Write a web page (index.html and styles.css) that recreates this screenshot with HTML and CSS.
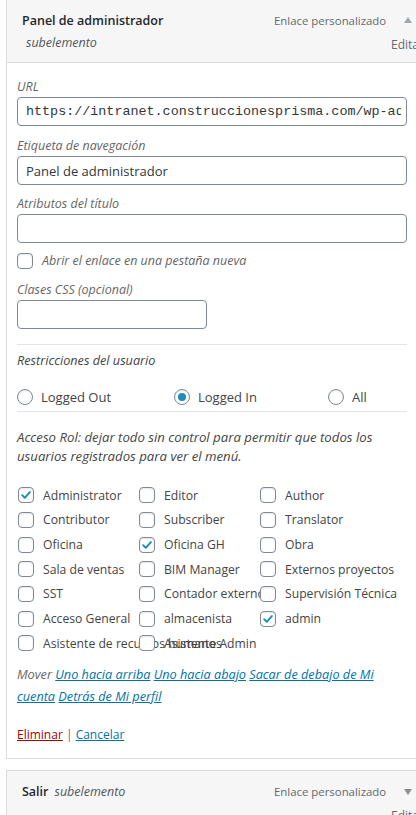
FILE: index.html
```html
<!DOCTYPE html>
<html lang="es">
<head>
<meta charset="utf-8">
<title>Panel de administrador</title>
<link rel="stylesheet" href="styles.css">
</head>
<body>
<div class="menu-item">
  <div class="item-bar">
    <div class="item-title">
      <span class="title">Panel de administrador</span>
      <span class="sub">subelemento</span>
    </div>
    <div class="item-controls">
      <div class="type-row"><span class="type">Enlace personalizado</span><span class="arrow up"></span></div>
      <span class="edit">Editar</span>
    </div>
  </div>
  <div class="item-settings">
    <div class="field">
      <label class="lbl">URL</label>
      <input class="txt mono" type="text" value="https://intranet.construccionesprisma.com/wp-admin/">
    </div>
    <div class="field gap-a">
      <label class="lbl">Etiqueta de navegación</label>
      <input class="txt" type="text" value="Panel de administrador">
    </div>
    <div class="field gap-b">
      <label class="lbl">Atributos del título</label>
      <input class="txt" type="text" value="">
    </div>
    <div class="check-line">
      <span class="cb"></span>
      <span class="lbl">Abrir el enlace en una pestaña nueva</span>
    </div>
    <div class="field gap-a">
      <label class="lbl">Clases CSS (opcional)</label>
      <input class="txt short" type="text" value="">
    </div>
    <div class="rule first"></div>
    <div class="section-title">Restricciones del usuario</div>
    <div class="radios">
      <div class="opt"><span class="rd"></span><span>Logged Out</span></div>
      <div class="opt"><span class="rd on"></span><span>Logged In</span></div>
      <div class="opt"><span class="rd"></span><span>All</span></div>
    </div>
    <div class="rule second"></div>
    <p class="note">Acceso Rol: dejar todo sin control para permitir que todos los usuarios registrados para ver el menú.</p>
    <div class="roles">
      <div class="opt"><span class="cb on"><svg viewBox="0 0 16 16"><path d="M3.6 8.2 6.6 11.2 12.4 4.6" /></svg></span><span>Administrator</span></div>
      <div class="opt"><span class="cb"></span><span>Editor</span></div>
      <div class="opt"><span class="cb"></span><span>Author</span></div>
      <div class="opt"><span class="cb"></span><span>Contributor</span></div>
      <div class="opt"><span class="cb"></span><span>Subscriber</span></div>
      <div class="opt"><span class="cb"></span><span>Translator</span></div>
      <div class="opt"><span class="cb"></span><span>Oficina</span></div>
      <div class="opt"><span class="cb on"><svg viewBox="0 0 16 16"><path d="M3.6 8.2 6.6 11.2 12.4 4.6" /></svg></span><span>Oficina GH</span></div>
      <div class="opt"><span class="cb"></span><span>Obra</span></div>
      <div class="opt"><span class="cb"></span><span>Sala de ventas</span></div>
      <div class="opt"><span class="cb"></span><span>BIM Manager</span></div>
      <div class="opt"><span class="cb"></span><span>Externos proyectos</span></div>
      <div class="opt"><span class="cb"></span><span>SST</span></div>
      <div class="opt"><span class="cb"></span><span>Contador externo</span></div>
      <div class="opt"><span class="cb"></span><span>Supervisión Técnica</span></div>
      <div class="opt"><span class="cb"></span><span>Acceso General</span></div>
      <div class="opt"><span class="cb"></span><span>almacenista</span></div>
      <div class="opt"><span class="cb on"><svg viewBox="0 0 16 16"><path d="M3.6 8.2 6.6 11.2 12.4 4.6" /></svg></span><span>admin</span></div>
      <div class="opt"><span class="cb"></span><span>Asistente de recursos humanos</span></div>
      <div class="opt"><span class="cb"></span><span>Asistente Admin</span></div>
    </div>
    <p class="move">Mover <a href="#">Uno hacia arriba</a> <a href="#">Uno hacia abajo</a> <a href="#">Sacar de debajo de Mi cuenta</a> <a href="#">Detrás de Mi perfil</a></p>
    <p class="actions"><a class="delete" href="#">Eliminar</a> <span class="sep">|</span> <a href="#">Cancelar</a></p>
  </div>
</div>
<div class="menu-item next">
  <div class="item-bar">
    <div class="item-title inline">
      <span class="title">Salir</span>
      <span class="sub">subelemento</span>
    </div>
    <div class="item-controls">
      <div class="type-row"><span class="type">Enlace personalizado</span><span class="arrow down"></span></div>
      <span class="edit">Editar</span>
    </div>
  </div>
</div>
</body>
</html>
```

FILE: styles.css
```css
html, body {
  margin: 0;
  padding: 0;
  background: #fff;
  overflow: hidden;
}
body {
  font-family: "Open Sans", "Noto Sans", sans-serif;
  font-size: 12.5px;
  color: #444;
  width: 416px;
  height: 815px;
}
.menu-item {
  margin-left: 6px;
  width: 412px;
  margin-top: -1px;
}
.menu-item.next {
  margin-top: 11px;
}
.item-bar {
  display: flex;
  height: 62px;
  padding-left: 15px;
  background: #f6f6f6;
  border: 1px solid #dcdcde;
  box-sizing: content-box;
  width: 395px;
  white-space: nowrap;
}
.item-title {
  display: flex;
  flex-direction: column;
  padding-top: 12px;
}
.item-title.inline {
  flex-direction: row;
  align-items: baseline;
}
.title {
  font-weight: 600;
  font-size: 12.5px;
  line-height: 18px;
  color: #23282d;
}
.sub {
  font-style: italic;
  color: #50575e;
  line-height: 18px;
  margin-top: 4px;
  padding-left: 4px;
}
.inline .sub {
  margin-top: 0;
  padding-left: 6px;
}
.item-controls {
  margin-left: auto;
  width: 143px;
  flex: none;
  padding-top: 12px;
  display: flex;
  flex-direction: column;
}
.type-row {
  display: flex;
  align-items: center;
  height: 18px;
}
.type {
  color: #646970;
  font-size: 11.4px;
  line-height: 18px;
  width: 110px;
}
.arrow {
  width: 0;
  height: 0;
  margin-left: 20px;
  border-left: 4px solid transparent;
  border-right: 4px solid transparent;
}
.arrow.up {
  border-bottom: 6px solid #a0a5aa;
  margin-top: -2px;
}
.arrow.down {
  border-top: 6px solid #8c8f94;
}
.edit {
  color: #646970;
  font-size: 12px;
  line-height: 18px;
  margin-top: 6px;
  padding-left: 117px;
}
.item-settings {
  border: 1px solid #dcdcde;
  border-top: none;
  padding: 15px 10px 12px;
}
.field {
  display: flex;
  flex-direction: column;
}
.gap-a { margin-top: 11px; }
.gap-b { margin-top: 10px; }
.lbl {
  font-style: italic;
  color: #666;
  line-height: 18px;
  margin-bottom: 1px;
}
.txt {
  display: block;
  box-sizing: border-box;
  width: 390px;
  height: 29px;
  margin: 0;
  padding: 0 8px;
  border: 1px solid #7e8993;
  border-radius: 4px;
  background: #fff;
  font-family: "Open Sans", "Noto Sans", sans-serif;
  font-size: 13px;
  color: #32373c;
  outline: none;
}
.txt.mono {
  font-family: "Liberation Mono", "DejaVu Sans Mono", monospace;
  font-size: 13.4px;
  padding: 0 5px 0 8px;
}
.txt.short {
  width: 190px;
}
.check-line {
  margin-top: 9px;
  display: flex;
  align-items: center;
  height: 18px;
  gap: 9px;
}
.check-line .lbl {
  margin: 0;
}
.cb {
  flex: none;
  box-sizing: border-box;
  width: 16px;
  height: 16px;
  border: 1px solid #7e8993;
  border-radius: 4px;
  background: #fff;
  box-shadow: inset 0 1px 2px rgba(0,0,0,0.1);
  display: flex;
  align-items: center;
  justify-content: center;
}
.cb svg {
  width: 14px;
  height: 14px;
  fill: none;
  stroke: #1e8cbe;
  stroke-width: 2.2;
  stroke-linecap: round;
  stroke-linejoin: round;
}
.rule {
  height: 1px;
  background: #e2e4e7;
}
.rule.first { margin-top: 15px; }
.rule.second { margin-top: 5px; }
.section-title {
  margin-top: 6px;
  font-style: italic;
  font-size: 12.7px;
  color: #444;
  line-height: 18px;
}
.radios {
  margin-top: 19px;
  display: grid;
  grid-template-columns: 157px 154px 1fr;
  height: 18px;
  font-size: 13px;
}
.opt {
  display: flex;
  align-items: center;
  white-space: nowrap;
  gap: 9px;
}
.radios .opt { gap: 8px; }
.rd {
  flex: none;
  box-sizing: border-box;
  width: 16px;
  height: 16px;
  border: 1px solid #7e8993;
  border-radius: 50%;
  background: #fff;
  box-shadow: inset 0 1px 2px rgba(0,0,0,0.1);
  display: flex;
  align-items: center;
  justify-content: center;
}
.rd.on::after {
  content: "";
  width: 8px;
  height: 8px;
  border-radius: 50%;
  background: #1e8cbe;
}
.note {
  margin: 16px 0 0;
  font-style: italic;
  font-size: 13.2px;
  line-height: 19px;
  color: #444;
}
.roles {
  margin-top: 17px;
  display: grid;
  grid-template-columns: 121px 121px 1fr;
  grid-auto-rows: 24.67px;
  padding-left: 1px;
  font-size: 12.2px;
}
.move {
  margin: 7px 0 0;
  font-style: italic;
  font-size: 12.7px;
  line-height: 22px;
  color: #666;
}
a {
  color: #0073aa;
  text-decoration: underline;
}
.actions {
  margin: 17px 0 0;
  line-height: 22px;
  font-size: 12px;
}
a.delete {
  color: #a00;
}
.sep {
  color: #666;
}
```
